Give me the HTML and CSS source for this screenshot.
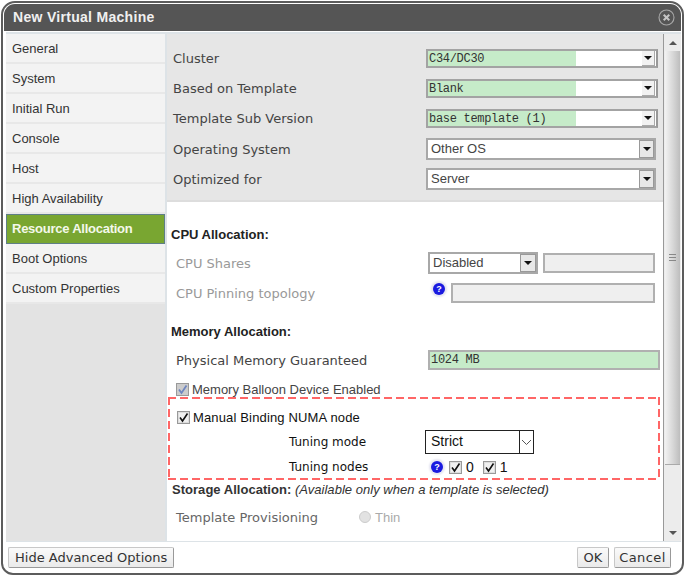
FILE: index.html
```html
<!DOCTYPE html>
<html lang="en">
<head>
    <meta charset="UTF-8">
    <meta name="viewport" content="width=device-width, initial-scale=1.0">
    <title>New Virtual Machine</title>
    <link rel="stylesheet" href="styles.css">
</head>
<body>
    <div class="dialog">
        <div class="titlebar">
            <span class="title">New Virtual Machine</span>
            <svg class="close" width="17" height="17" viewBox="0 0 17 17">
                <circle cx="8.5" cy="8.5" r="7.5" fill="none" stroke="#a8a8a8" stroke-width="1.1"/>
                <path d="M5.7 5.7 L11.3 11.3 M11.3 5.7 L5.7 11.3" stroke="#c4c4c4" stroke-width="2"/>
            </svg>
        </div>

        <div class="main">
            <ul class="tabs">
                <li>General</li>
                <li>System</li>
                <li>Initial Run</li>
                <li>Console</li>
                <li>Host</li>
                <li>High Availability</li>
                <li class="active">Resource Allocation</li>
                <li>Boot Options</li>
                <li>Custom Properties</li>
            </ul>

            <div class="panel">
                <div class="content">
                    <div class="top-section">
                        <div class="row">
                            <span class="label">Cluster</span>
                            <div class="combo"><span class="combo-text">C34/DC30</span><span class="combo-arrow"></span></div>
                        </div>
                        <div class="row">
                            <span class="label">Based on Template</span>
                            <div class="combo"><span class="combo-text">Blank</span><span class="combo-arrow"></span></div>
                        </div>
                        <div class="row">
                            <span class="label">Template Sub Version</span>
                            <div class="combo"><span class="combo-text">base template (1)</span><span class="combo-arrow"></span></div>
                        </div>
                        <div class="row">
                            <span class="label">Operating System</span>
                            <div class="select"><span class="select-text">Other OS</span><span class="select-arrow"></span></div>
                        </div>
                        <div class="row">
                            <span class="label">Optimized for</span>
                            <div class="select"><span class="select-text">Server</span><span class="select-arrow"></span></div>
                        </div>
                    </div>

                    <h3 class="heading cpu-heading">CPU Allocation:</h3>
                    <div class="row sub">
                        <span class="label disabled">CPU Shares</span>
                        <div class="select small"><span class="select-text">Disabled</span><span class="select-arrow"></span></div>
                        <div class="text-input shares-input"></div>
                    </div>
                    <div class="row sub">
                        <span class="label disabled">CPU Pinning topology</span>
                        <span class="help help-pin">?</span>
                        <div class="text-input pin-input"></div>
                    </div>

                    <h3 class="heading mem-heading">Memory Allocation:</h3>
                    <div class="row sub">
                        <span class="label">Physical Memory Guaranteed</span>
                        <div class="text-input memory-input">1024 MB</div>
                    </div>
                    <div class="check-row balloon">
                        <span class="check muted"><svg width="11" height="11" viewBox="0 0 11 11"><path d="M2 5.5 L4.5 9 L9.5 1.5" fill="none" stroke="#6f86c0" stroke-width="1.8"/></svg></span>
                        <span>Memory Balloon Device Enabled</span>
                    </div>

                    <div class="numa">
                        <div class="check-row numa-check">
                            <span class="check"><svg width="11" height="11" viewBox="0 0 11 11"><path d="M2 5.5 L4.5 9 L9.5 1.5" fill="none" stroke="#111" stroke-width="1.6"/></svg></span>
                            <span>Manual Binding NUMA node</span>
                        </div>
                        <div class="numa-row tuning-mode">
                            <span class="numa-label">Tuning mode</span>
                            <div class="flat-select">
                                <span class="flat-value">Strict</span>
                                <span class="flat-arrow"><svg width="11" height="7" viewBox="0 0 11 7"><path d="M1 1 L5.5 5.5 L10 1" fill="none" stroke="#555" stroke-width="1"/></svg></span>
                            </div>
                        </div>
                        <div class="numa-row tuning-nodes">
                            <span class="numa-label">Tuning nodes</span>
                            <span class="help help-nodes">?</span>
                            <span class="check small-check"><svg width="11" height="11" viewBox="0 0 11 11"><path d="M2 5.5 L4.5 9 L9.5 1.5" fill="none" stroke="#111" stroke-width="1.6"/></svg></span>
                            <span class="node-num">0</span>
                            <span class="check small-check node-two"><svg width="11" height="11" viewBox="0 0 11 11"><path d="M2 5.5 L4.5 9 L9.5 1.5" fill="none" stroke="#111" stroke-width="1.6"/></svg></span>
                            <span class="node-num">1</span>
                        </div>
                    </div>

                    <p class="storage"><b>Storage Allocation:</b> <i>(Available only when a template is selected)</i></p>
                    <div class="row sub provisioning">
                        <span class="label muted-label">Template Provisioning</span>
                        <span class="radio"></span>
                        <span class="radio-text">Thin</span>
                    </div>
                </div>

                <div class="scrollbar">
                    <span class="scroll-up"></span>
                    <div class="thumb">
                        <span class="grip"></span>
                    </div>
                    <span class="scroll-down"></span>
                </div>
            </div>
        </div>

        <div class="footer">
            <button class="btn">Hide Advanced Options</button>
            <div class="footer-right">
                <button class="btn btn-ok">OK</button>
                <button class="btn btn-cancel">Cancel</button>
            </div>
        </div>
    </div>
</body>
</html>
```

FILE: styles.css
```css
* {
    box-sizing: border-box;
}

body {
    margin: 0;
    background-color: #fff;
    font-family: "Liberation Sans", Arial, sans-serif;
    font-size: 13px;
    color: #333;
}

.dialog {
    width: 683px;
    height: 574px;
    margin: 1px 0 0 1px;
    padding: 1px;
    border: 2px solid #5c5c5c;
    border-radius: 14px 14px 12px 12px;
    background-color: #fff;
    display: flex;
    flex-direction: column;
}

/* title */
.titlebar {
    height: 27px;
    background-color: #555;
    border-radius: 11px 11px 0 0;
    display: flex;
    align-items: center;
    justify-content: space-between;
    padding: 0 6px 1px 9px;
    flex-shrink: 0;
}

.title {
    color: #f0f0f0;
    font-size: 14px;
    font-weight: bold;
    letter-spacing: 0.3px;
}

.close {
    margin-top: 1px;
}

/* main area */
.main {
    height: 510px;
    margin-top: 1px;
    margin-left: 2px;
    border-top: 2px solid #dde3e7;
    border-bottom: 1px solid #dde3e7;
    display: flex;
    background-color: #fff;
}

.tabs {
    width: 161px;
    margin: 0;
    padding: 0;
    list-style: none;
    background-color: #e3e3e3;
    border-right: 2px solid #dde3e7;
    flex-shrink: 0;
}

.tabs li {
    height: 30px;
    padding: 0 0 0 6px;
    display: flex;
    align-items: center;
    background-color: #f3f3f3;
    border-bottom: 2px solid #e8e8e8;
    color: #333;
}

.tabs li.active {
    background-color: #79a631;
    color: #f4f8ea;
    font-weight: bold;
    letter-spacing: -0.25px;
    border: 1px solid #5f7f86;
    padding-bottom: 2px;
    padding-left: 5px;
}

.panel {
    flex: 1;
    display: flex;
}

.content {
    width: 496px;
    flex-shrink: 0;
}

.top-section {
    height: 168px;
    padding-top: 9px;
    background-color: #e6e6e6;
    border-bottom: 2px solid #ddd;
}

.row {
    height: 30px;
    padding-left: 6px;
    display: flex;
    align-items: center;
}

.top-section .row:nth-child(4) {
    margin-top: 1px;
}

.label {
    width: 253px;
    flex-shrink: 0;
    font-family: "DejaVu Sans", sans-serif;
    font-size: 13px;
    color: #444;
}

.label.disabled {
    color: #999;
}

.muted-label {
    color: #666;
}

/* combo boxes with green fill */
.combo {
    width: 232px;
    height: 19px;
    border: 2px solid #a3a3a3;
    border-right-color: #999;
    background: linear-gradient(to right, #c6ebc9 148px, #fff 148px);
    display: flex;
    align-items: center;
    justify-content: space-between;
}

.combo-text {
    font-family: "Liberation Mono", monospace;
    font-size: 12px;
    letter-spacing: -0.3px;
    color: #333;
    padding: 2px 0 0 1px;
}

.combo-arrow {
    width: 13px;
    height: 15px;
    margin-right: 1px;
    background-color: #f2f2f2;
    border-right: 1px solid #aaa;
    border-bottom: 1px solid #aaa;
    position: relative;
}

.combo-arrow::after,
.select-arrow::after {
    content: "";
    position: absolute;
    left: 50%;
    top: 50%;
    margin: -2px 0 0 -4px;
    border-style: solid;
    border-width: 4px 4px 0 4px;
    border-color: #111 transparent transparent transparent;
}

.select {
    width: 230px;
    height: 22px;
    border: 2px solid #a8a8a8;
    background-color: #fff;
    display: flex;
    align-items: center;
    justify-content: space-between;
    padding-left: 3px;
    font-size: 13px;
    color: #444;
}

.select-text {
    padding-bottom: 1px;
}

.select-arrow {
    width: 15px;
    height: 18px;
    background-color: #e8e8e8;
    border: 1px solid #999;
    position: relative;
}

.select.small {
    width: 110px;
}

.select.small .select-arrow {
    width: 16px;
}

/* headings */
.heading {
    margin: 0;
    padding-left: 4px;
    font-size: 13px;
    font-weight: bold;
    color: #222;
    line-height: 16px;
}

.cpu-heading {
    margin-top: 25px;
    margin-bottom: 5px;
}

.mem-heading {
    margin-top: 16px;
    margin-bottom: 5px;
}

.sub {
    padding-left: 9px;
}

.sub .label {
    width: 252px;
}

.text-input {
    height: 20px;
    border: 2px solid #b0b0b0;
    background-color: #efefef;
}

.shares-input {
    width: 112px;
    margin-left: 5px;
}

.pin-input {
    width: 204px;
    margin-left: 6px;
}

.memory-input {
    width: 232px;
    background-color: #c6ebc9;
    font-family: "Liberation Mono", monospace;
    font-size: 12px;
    letter-spacing: -0.3px;
    line-height: 16px;
    padding-left: 1px;
}

/* blue help dot */
.help {
    width: 12px;
    height: 12px;
    border-radius: 50%;
    background-color: #1a1ae0;
    color: #fff;
    font-size: 9px;
    font-weight: bold;
    line-height: 12px;
    text-align: center;
    box-shadow: 0 0 2px 2px #e4e4f0;
    flex-shrink: 0;
}

.help-pin {
    margin: -8px 0 0 5px;
}

.help-nodes {
    margin-left: 6px;
}

/* checkboxes */
.check-row {
    display: flex;
    align-items: center;
    height: 20px;
}

.check {
    width: 13px;
    height: 13px;
    border: 1px solid #999;
    background-color: #f0f0f0;
    box-shadow: inset 0 0 0 1px #ddd;
    display: flex;
    align-items: center;
    justify-content: center;
    flex-shrink: 0;
}

.check.muted {
    background-color: #ccc;
    box-shadow: none;
}

.balloon {
    margin-top: 4px;
    padding-left: 9px;
    gap: 3px;
    color: #444;
}

/* red dashed NUMA box */
.numa {
    width: 492px;
    height: 83px;
    margin: -2px 0 0 1px;
    padding: 10px 0 0 9px;
    color: #111;
    background-image:
        repeating-linear-gradient(to right, #f66 0 8px, transparent 8px 12px),
        repeating-linear-gradient(to right, #f66 0 8px, transparent 8px 12px),
        repeating-linear-gradient(to bottom, #f66 0 8px, transparent 8px 12px),
        repeating-linear-gradient(to bottom, #f66 0 8px, transparent 8px 12px);
    background-size: 100% 2px, 100% 2px, 2px 100%, 2px 100%;
    background-position: 0 0, 0 100%, 0 0, 100% 0;
    background-repeat: no-repeat;
}

.numa-check {
    gap: 3px;
    letter-spacing: 0.15px;
}

.numa-row {
    display: flex;
    align-items: center;
    padding-left: 112px;
}

.tuning-mode {
    height: 24px;
    margin-top: 3px;
}

.tuning-nodes {
    height: 22px;
    margin-top: 2px;
}

.numa-label {
    width: 136px;
    flex-shrink: 0;
    font-family: "DejaVu Sans", sans-serif;
    font-size: 12px;
}

.flat-select {
    width: 109px;
    height: 24px;
    border: 1px solid #222;
    display: flex;
    font-size: 14px;
    background-color: #fff;
}

.flat-value {
    flex: 1;
    padding-left: 5px;
    line-height: 20px;
}

.flat-arrow {
    width: 14px;
    border-left: 1px solid #222;
    display: flex;
    align-items: center;
    justify-content: center;
}

.small-check {
    margin-left: 6px;
}

.node-two {
    margin-left: 9px;
}

.node-num {
    margin-left: 4px;
    font-size: 14px;
}

/* storage */
.storage {
    margin: 2px 0 0 5px;
    font-size: 13px;
    letter-spacing: 0.03px;
    line-height: 16px;
    color: #333;
    white-space: nowrap;
}

.provisioning {
    margin-top: 4px;
}

.radio {
    width: 12px;
    height: 12px;
    border-radius: 50%;
    border: 1px solid #ccc;
    background-color: #e2e2e2;
}

.radio-text {
    margin-left: 4px;
    color: #aaa;
    font-size: 13px;
}

.provisioning .label {
    width: 183px;
}

/* scrollbar */
.scrollbar {
    width: 18px;
    background-color: #ececec;
    border-left: 1px solid #999;
    display: flex;
    flex-direction: column;
    align-items: center;
}

.scroll-up {
    margin-top: 7px;
    border-style: solid;
    border-width: 0 4px 4px 4px;
    border-color: transparent transparent #555 transparent;
}

.thumb {
    width: 15px;
    height: 414px;
    margin-top: 6px;
    background: linear-gradient(to right, #f2f2f2, #d6d6d6 55%, #bdbdbd);
    border-bottom: 1px solid #aaa;
    display: flex;
    align-items: center;
    justify-content: center;
}

.grip {
    width: 7px;
    height: 7px;
    border-top: 1px solid #888;
    border-bottom: 1px solid #888;
    background: linear-gradient(#888, #888) center / 100% 1px no-repeat;
}

.scroll-down {
    margin-top: 66px;
    border-style: solid;
    border-width: 4px 4px 0 4px;
    border-color: #555 transparent transparent transparent;
}

/* footer */
.footer {
    flex: 1;
    display: flex;
    justify-content: space-between;
    padding: 5px 10px 0 4px;
    align-items: flex-start;
}

.footer-right {
    display: flex;
    gap: 5px;
}

.btn {
    height: 21px;
    padding: 0 6px;
    font-family: "DejaVu Sans", sans-serif;
    font-size: 13px;
    color: #333;
    background: linear-gradient(#fafafa, #eaeaea);
    border: 1px solid #c8c8c8;
    border-right-color: #999;
    border-bottom-color: #999;
    border-radius: 2px;
}

.btn-ok {
    width: 32px;
    padding: 0;
}

.btn-cancel {
    width: 57px;
    padding: 0;
    letter-spacing: 0.4px;
}
```
